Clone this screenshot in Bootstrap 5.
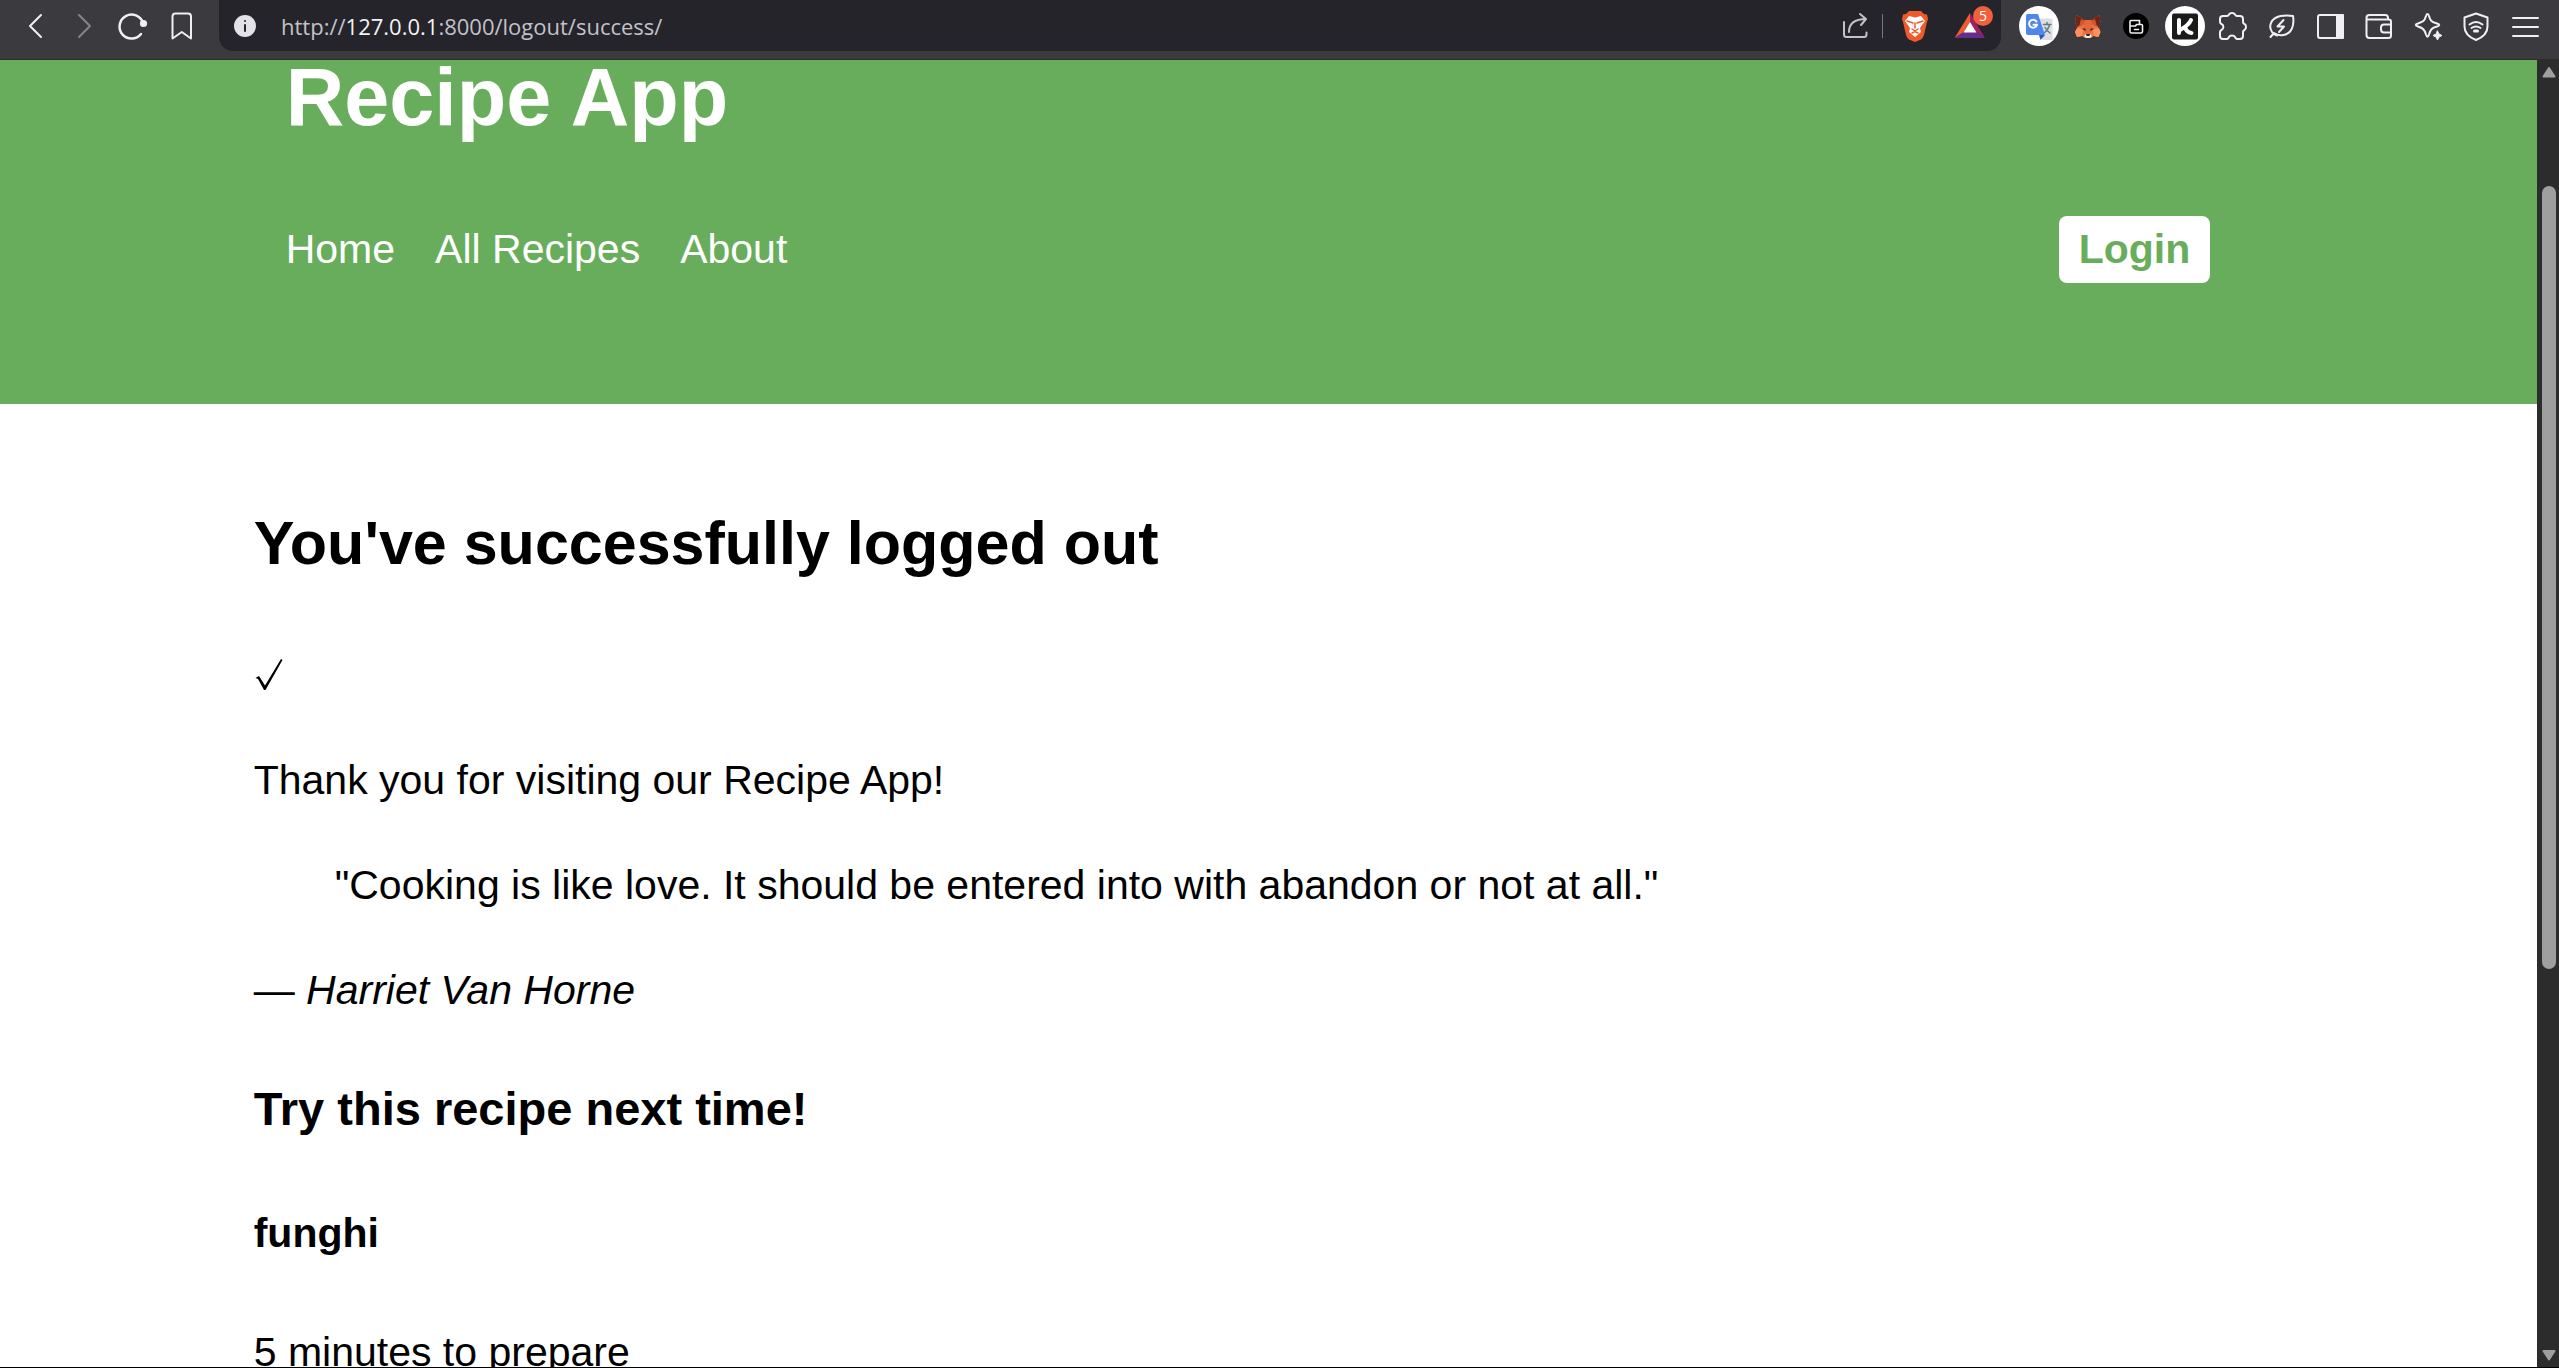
<!DOCTYPE html>
<html lang="en">
<head>
<meta charset="utf-8">
<meta name="viewport" content="width=device-width, initial-scale=1">
<title>Recipe App</title>
<link href="https://cdn.jsdelivr.net/npm/bootstrap@5.3.0/dist/css/bootstrap.min.css" rel="stylesheet">
<style>
  body { font-family: "Liberation Sans", Arial, sans-serif; font-size: 41px; line-height: 65px; color: #000; background: #fff; }

  /* Browser toolbar */
  .toolbar { height: 60px; background: #3b3a3f; border-bottom: 1px solid #2c2c2f; padding: 0 14px 0 15px; }
  .tool-set { height: 52px; padding-top: 6px; }
  .nav-tools { gap: 9px; }
  .ext-tools { width: 526px; margin-left: 18px; }
  .tool { width: 40px; height: 40px; padding: 0; border: 0; background: none; display: block; position: relative; flex: none; }
  .tool svg { width: 40px; height: 40px; display: block; fill: none; stroke: #f0f0f4; stroke-width: 2; stroke-linecap: round; stroke-linejoin: round; }
  .tool:disabled svg { stroke: #85848a; }
  .address { height: 51px; margin-left: 17px; padding: 0 11px 0 6px; background: #25242a; border-radius: 0 0 14px 14px; }
  .address-text { font-family: "Open Sans", "Noto Sans", sans-serif; font-size: 22px; line-height: 30px; color: #c3c2c7; margin-left: 16px; }
  .address-text b { font-weight: 400; color: #f3f3f6; }
  .address .rule { width: 1px; height: 24px; background: #77767c; margin: 0 12px 0 6px; }
  .address .rewards { margin-left: 15px; }
  .count { position: absolute; left: 23px; top: 0; width: 20px; height: 20px; border-radius: 10px; background: #f0603c; color: #fff; font: 14px/20px "Open Sans", sans-serif; text-align: center; }

  /* Page */
  .page-view { height: calc(100vh - 61px); }
  .page-view main, .page-view .site-inner { width: 80%; margin: 0 auto; }
  .site-head { background: #68ad5c; padding-bottom: 121px; color: #fff; }
  .site-inner { padding: 0 32px; }
  .site-head h1 { font-size: 81px; line-height: 74px; font-weight: 700; margin: 0 0 82px; }
  .site-links { height: 67px; padding-right: 41px; gap: 40px; }
  .site-links a { color: #fff; text-decoration: none; }
  .site-links .login { font-size: 41px; line-height: 67px; font-weight: 700; color: #68ad5c; background: #fff; border: 0; border-radius: 8px; padding: 0 20px; }
  main { padding-top: 90px; }
  main h2 { font-size: 61px; line-height: 98px; font-weight: 700; margin: 0 0 51px; }
  main p, main blockquote { font-size: 41px; margin: 0 0 40px; }
  main blockquote { padding-left: 81px; }
  main h3 { font-size: 47px; line-height: 76px; font-weight: 700; margin: 48px 0 54px; }
  main h4 { font-size: 41px; line-height: 65px; font-weight: 700; margin: 0 0 54px; }
  .tick { width: 31px; height: 65px; display: block; }

  /* Scrollbar */
  .scroller { width: 22px; background: #2c2c2c; padding: 6px 0 6px 5px; }
  .scroller svg { width: 14px; height: 12px; display: block; fill: #9f9f9f; stroke: #9f9f9f; stroke-width: 2; stroke-linejoin: round; }
  .scroller .lane { padding: 108px 0 380px; }
  .scroller .thumb { width: 14px; height: 100%; border-radius: 7px; background: #9f9f9f; }
  .screen-edge { height: 1px; background: #000; }
</style>
</head>
<body class="vh-100 overflow-hidden d-flex flex-column">
<header class="toolbar d-flex flex-shrink-0">
  <div class="tool-set nav-tools d-flex">
    <button class="tool" type="button" aria-label="Back"><svg viewBox="0 0 40 40"><path d="M26 9 15 20l11 11"/></svg></button>
    <button class="tool" type="button" aria-label="Forward" disabled><svg viewBox="0 0 40 40"><path d="m15 9 11 11-11 11"/></svg></button>
    <button class="tool" type="button" aria-label="Reload"><svg viewBox="0 0 40 40"><path d="M30 17a12 12 0 1 0-2 11" stroke-width="2.500"/><circle cx="30.500" cy="17.500" r="2.600" fill="#f0f0f4"/></svg></button>
    <button class="tool" type="button" aria-label="Bookmark"><svg viewBox="0 0 40 40"><path d="M10.500 10.500q0-3 3-3H26q3 0 3 3v22L19.800 26l-9.300 6.500z"/></svg></button>
  </div>
  <div class="address d-flex align-items-center flex-grow-1">
    <button class="tool" type="button" aria-label="Site information"><svg viewBox="0 0 40 40"><circle cx="20" cy="20" r="11" fill="#e3e2e8" stroke="none"/><path d="M20 19v6M20 15v.1" stroke="#25242a"/></svg></button>
    <div class="address-text flex-grow-1">http://<b>127.0.0.1</b>:8000/logout/success/</div>
    <button class="tool" type="button" aria-label="Share"><svg viewBox="0 0 40 40"><g stroke="#c3c2c7"><path d="M8 16v12.500q0 2.500 2.500 2.500h17.500q2.500 0 2.500-2.500v-2M13 26c0-8 5-13 17-13M24 8l6 5-5 6"/></g></svg></button>
    <span class="rule"></span>
    <button class="tool" type="button" aria-label="Brave Shields"><svg viewBox="0 0 40 40"><path d="m14 5-3 3-3 .5L7 13l1 3 3 13q1 3 3 4.500L20 36l6-2.500q2-1.500 3-4.500l3-13 1-3-1-4.500-3-.5-3-3z" fill="#f1592b" stroke="none"/><path d="m14 10 6 1.500L26 10l4 5-5 7 1 4-6 5-6-5 1-4-5-7z" fill="#fff" stroke="none"/><path d="m12 15 6 2M28 15l-6 2M20 17v5M17 23l3 2 3-2M17 27l3-1.500 3 1.500" stroke="#f1592b" stroke-width="1.500"/></svg></button>
    <button class="tool rewards" type="button" aria-label="Brave Rewards"><svg viewBox="0 0 40 40"><g stroke="none"><path d="M20 7 4.500 32 14 26l6-10z" fill="#f25a2f"/><path d="M20 7v9l6 10 9 6z" fill="#9e1f63"/><path d="M4.500 32H35l-9-6H14z" fill="#662d91"/><path d="m20 16-6.500 10.500h13z" fill="#fff"/></g></svg><span class="count">5</span></button>
  </div>
  <div class="tool-set ext-tools d-flex justify-content-between">
    <button class="tool" type="button" aria-label="Translate"><svg viewBox="0 0 40 40"><g stroke="none"><circle cx="20" cy="20" r="20" fill="#fff"/><path d="M20 12.500h12q1.500 0 1.500 1.500v18.500q0 1.500-1.500 1.500H23z" fill="#dcdee2"/><path d="M8.500 8H19l7 21H9q-2 0-2-2V9.500Q7 8 8.500 8z" fill="#4e86ee"/><path d="M20 29h6l-4.500 5z" fill="#3450c0"/></g><path d="M17.500 15.500a4 4 0 1 0 .5 3.200h-3.500" stroke="#fff" stroke-width="2"/><path d="M24.500 18.500h7.500M28 16.500v2M30.500 18.500q-1 5-5 8M26 21.500q2 3.500 5 5.500" stroke="#607d8b" stroke-width="1.500"/></svg></button>
    <button class="tool" type="button" aria-label="MetaMask"><svg viewBox="0 0 40 40"><g stroke="none"><path d="M8.500 9 17 14h6l8.500-5 1 7-2.500 6 2.500 4-2 5-5-1-2.500 2h-6L14 30l-5 1-2-5 2.500-4L7 16z" fill="#ef7842"/><path d="M8.500 9 17 14l-2 4-6 3-2-5zM31.500 9 23 14l2 4 6 3 1.500-5z" fill="#6f2419"/><path d="m13 13 5 2-3 4-4 2zM27 13l-5 2 3 4 4 2z" fill="#d3552f"/><path d="m17 14-2 7 3 7h4l3-7-2-7z" fill="#e8673a"/><path d="m7 26 2-4 6 2-1 6-5 1zM32.500 26 31 22l-6 2 1 6 4.500 1z" fill="#ff9160"/><path d="m16 30 2-2h4l2 2-2 2h-4z" fill="#f3ece8"/><path d="m14 22 4 1-1 2zM26 22l-4 1 1 2zM18 28h4l-.5 2h-3z" fill="#252b38"/></g></svg></button>
    <button class="tool" type="button" aria-label="Extension"><svg viewBox="0 0 40 40"><circle cx="20" cy="20" r="13" fill="#000" stroke="none"/><path d="M14 25V15.500q0-1 1-1h8.500v4H25.500q1 0 1 1V25.500q0 1.500-1.500 1.500H15.500Q14 27 14 25.500M14 20h5.500l1-1.500h3M18.500 23.500h4" stroke-width="1.600"/></svg></button>
    <button class="tool" type="button" aria-label="Keyboard extension"><svg viewBox="0 0 40 40"><circle cx="20" cy="20" r="20" fill="#fff" stroke="none"/><rect x="7" y="7.500" width="26" height="26" rx="2" fill="#1b1b1c" stroke="none"/><path d="M14 14v13M26 14q-2 5-11 10M20 21q1.500 5.500 6.500 6" stroke="#fff" stroke-width="4"/></svg></button>
    <button class="tool" type="button" aria-label="Extensions"><svg viewBox="0 0 40 40"><path d="M7 13q0-3 3-3h4c1 0 1.500-.5 2-1.500 1-2 5-2 6 0 .5 1 1 1.500 2 1.500h3q3 0 3 3v3c0 1 .5 1.500 1.500 2 2 1 2 5 0 6-1 .5-1.500 1-1.500 2v4q0 3-3 3h-3c-1 0-1.500-1-2-2-1-2-5-2-6 0-.5 1-1 2-2 2h-4q-3 0-3-3v-4c0-1 .5-1.500 1.500-2 2.500-1 2.500-5 0-6C7.500 17.500 7 17 7 16z"/></svg></button>
    <button class="tool" type="button" aria-label="Energy saver"><svg viewBox="0 0 40 40"><path d="m8.500 31 3.500-4q4 3 9.500 2C30 27.500 32.500 19 31 10q-6-1-12.500 0C9 12 6 20 10 26q2 3 5 3.500"/><path d="m21.500 14-6 6.500H22l-5 5.500"/></svg></button>
    <button class="tool" type="button" aria-label="Sidebar"><svg viewBox="0 0 40 40"><rect x="7" y="9" width="25" height="23" rx="2"/><path d="M26 9h6v23h-6z" fill="#f0f0f4"/></svg></button>
    <button class="tool" type="button" aria-label="Wallet"><svg viewBox="0 0 40 40"><path d="M7.500 11v18q0 3 3 3h19q2.500 0 2.500-2.500v-14q0-2-2.500-2h-21M7.500 11.500q0-2.500 3-2.500h16q2 0 2.500 2.500v2M32 18.500h-7q-3 0-3 3v2q0 3 3 3h7"/></svg></button>
    <button class="tool" type="button" aria-label="AI assistant"><svg viewBox="0 0 40 40"><path d="M19.500 8q1 0 1.500 2c1.500 5 2.500 6 8 7.500 3 1 3 2 0 3-5.500 1.500-6.500 3-8 8-1 3-2 3-3 0-1.500-5-3-6.500-8-8-3-1-3-2 0-3 5-1.500 6.500-2.500 8-7.500q.5-2 1.500-2z"/><path d="m29.500 25 1.500 3 3 1.500-3 1.500-1.500 3-1.500-3-3-1.500 3-1.500z" fill="#f0f0f4" stroke-width="1"/></svg></button>
    <button class="tool" type="button" aria-label="VPN"><svg viewBox="0 0 40 40"><path d="m20 7.500 11.500 4v9q0 9-11.500 13.500Q8.500 29.500 8.500 20.500v-9z"/><path d="M13.500 18.500q6.500-5 13 0M15.500 22q4.500-3 9 0"/><path d="M18.500 25h3" stroke-width="3"/></svg></button>
    <button class="tool" type="button" aria-label="Menu"><svg viewBox="0 0 40 40"><path d="M8 12h25M8 21h25M8 30h25"/></svg></button>
  </div>
</header>
<div class="page-view d-flex">
  <div class="flex-grow-1 overflow-hidden">
    <div class="site-head">
      <div class="site-inner">
        <h1>Recipe App</h1>
        <nav class="site-links d-flex align-items-center">
          <a href="#">Home</a>
          <a href="#">All Recipes</a>
          <a href="#">About</a>
          <button class="login ms-auto" type="button">Login</button>
        </nav>
      </div>
    </div>
    <main>
      <h2>You've successfully logged out</h2>
      <p><svg class="tick" viewBox="0 0 31 65" role="img" aria-label="Done"><path d="m1.500 35 3.500-2 6 9.500L27 16l1.500 1L11.500 47H10L4 36z"/></svg></p>
      <p>Thank you for visiting our Recipe App!</p>
      <blockquote>"Cooking is like love. It should be entered into with abandon or not at all."</blockquote>
      <p>— <em>Harriet Van Horne</em></p>
      <h3>Try this recipe next time!</h3>
      <h4>funghi</h4>
      <p>5 minutes to prepare</p>
    </main>
  </div>
  <div class="scroller d-flex flex-column flex-shrink-0">
    <svg viewBox="0 0 14 12"><path d="m7 2 5.500 8.500h-11z"/></svg>
    <div class="lane flex-grow-1"><div class="thumb"></div></div>
    <svg viewBox="0 0 14 12"><path d="m7 10.500 5.500-8.500h-11z"/></svg>
  </div>
</div>
<div class="screen-edge flex-shrink-0"></div>
<script src="https://cdn.jsdelivr.net/npm/bootstrap@5.3.0/dist/js/bootstrap.bundle.min.js"></script>
</body>
</html>
